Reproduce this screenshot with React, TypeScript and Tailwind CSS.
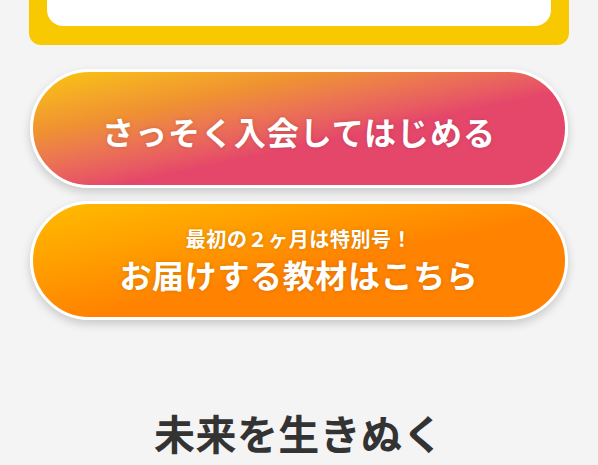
import React from "react";

export default function App() {
  return (
    <div
      className="min-h-[465px] w-full bg-[#f4f4f4] overflow-hidden"
      style={{ fontFamily: '"Noto Sans CJK JP", "Noto Sans", sans-serif' }}
    >
      <div className="mx-auto w-[540px] rounded-b-[12px] bg-[#f8c800] px-[18px] pb-[19px]">
        <div className="h-[26px] rounded-b-[16px] bg-white" />
      </div>

      <div className="mx-auto mt-[24px] flex w-[538px] flex-col gap-[13px]">
        <a
          href="#"
          className="flex h-[119px] items-center justify-center rounded-full border-[3px] border-white bg-linear-to-br from-[#f9c600] via-[#ef9032] via-[28%] to-[#e5476a] to-[58%] shadow-[0_4px_10px_rgba(0,0,0,0.18)]"
        >
          <span className="pt-[5px] text-[32px] font-bold leading-none tracking-[0.03em] text-white [text-shadow:0_0_4px_rgba(0,0,0,0.15)]">
            さっそく入会してはじめる
          </span>
        </a>
        <a
          href="#"
          className="flex h-[119px] flex-col items-center justify-center rounded-full border-[3px] border-white bg-linear-to-br from-[#ffbc00] to-[#ff8200] to-[55%] shadow-[0_4px_10px_rgba(0,0,0,0.18)]"
        >
          <span className="text-[20px] font-bold leading-[1.2] tracking-[0.03em] text-white [text-shadow:0_0_4px_rgba(0,0,0,0.15)]">
            最初の２ヶ月は特別号！
          </span>
          <span className="mt-[4px] text-[32px] font-bold leading-[1.2] tracking-[0.02em] text-white [text-shadow:0_0_4px_rgba(0,0,0,0.15)]">
            お届けする教材はこちら
          </span>
        </a>
      </div>

      <h2 className="mt-[88px] text-center text-[41px] font-bold leading-[1.2] tracking-[0.01em] text-[#333333]">
        未来を生きぬく
      </h2>
    </div>
  );
}
